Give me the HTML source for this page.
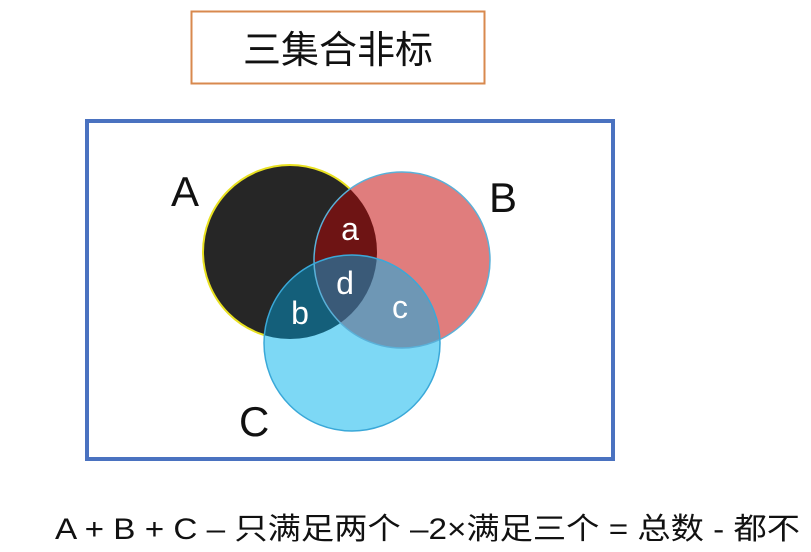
<!DOCTYPE html>
<html><head><meta charset="utf-8"><style>
body{margin:0;width:811px;height:552px;background:#fff;overflow:hidden;font-family:"Liberation Sans","Noto Sans CJK SC",sans-serif}
</style></head><body>
<svg width="811" height="552" viewBox="0 0 811 552" xmlns="http://www.w3.org/2000/svg" style="position:absolute;left:0;top:0">
<defs>
<clipPath id="cA"><circle cx="290" cy="252" r="87"/></clipPath>
<clipPath id="cB"><circle cx="402" cy="260" r="88"/></clipPath>
<clipPath id="cC"><circle cx="352" cy="343" r="88"/></clipPath>
</defs>
<rect x="191.5" y="11.5" width="293" height="72" fill="#fff" stroke="#d8894e" stroke-width="2"/>
<text x="338" y="63" font-size="38" text-anchor="middle" font-family="Liberation Sans,Noto Sans CJK SC,sans-serif" fill="#111">三集合非标</text>
<rect x="87" y="121" width="526" height="338" fill="none" stroke="#4a72c0" stroke-width="4"/>
<circle cx="290" cy="252" r="87" fill="#262626" stroke="#e8e020" stroke-width="2"/>
<circle cx="402" cy="260" r="88" fill="#e07d7d"/>
<circle cx="352" cy="343" r="88" fill="#7dd8f5"/>
<g clip-path="url(#cA)"><circle cx="402" cy="260" r="88" fill="#6e1414"/><circle cx="352" cy="343" r="88" fill="#145f7a"/></g>
<g clip-path="url(#cB)"><circle cx="352" cy="343" r="88" fill="#6e97b5"/></g>
<g clip-path="url(#cA)"><g clip-path="url(#cB)"><circle cx="352" cy="343" r="88" fill="#3a5a78"/></g></g>
<circle cx="402" cy="260" r="88" fill="none" stroke="#5ab0d8" stroke-width="1.5"/>
<circle cx="352" cy="343" r="88" fill="none" stroke="#3aa8d8" stroke-width="1.5"/>
<g fill="#fff" font-size="32" text-anchor="middle" font-family="Liberation Sans,sans-serif">
<text x="350" y="240">a</text><text x="345" y="294">d</text><text x="300" y="324">b</text><text x="400" y="318">c</text></g>
<g fill="#111" font-size="42" font-family="Liberation Sans,sans-serif">
<text x="171" y="206">A</text><text x="489" y="212">B</text><text x="239" y="436">C</text></g>
<text x="55" y="539" font-size="30" fill="#111" textLength="745" lengthAdjust="spacingAndGlyphs" font-family="Liberation Sans,Noto Sans CJK SC,sans-serif">A + B + C – 只满足两个 –2×满足三个 = 总数 - 都不</text>
</svg>
</body></html>
